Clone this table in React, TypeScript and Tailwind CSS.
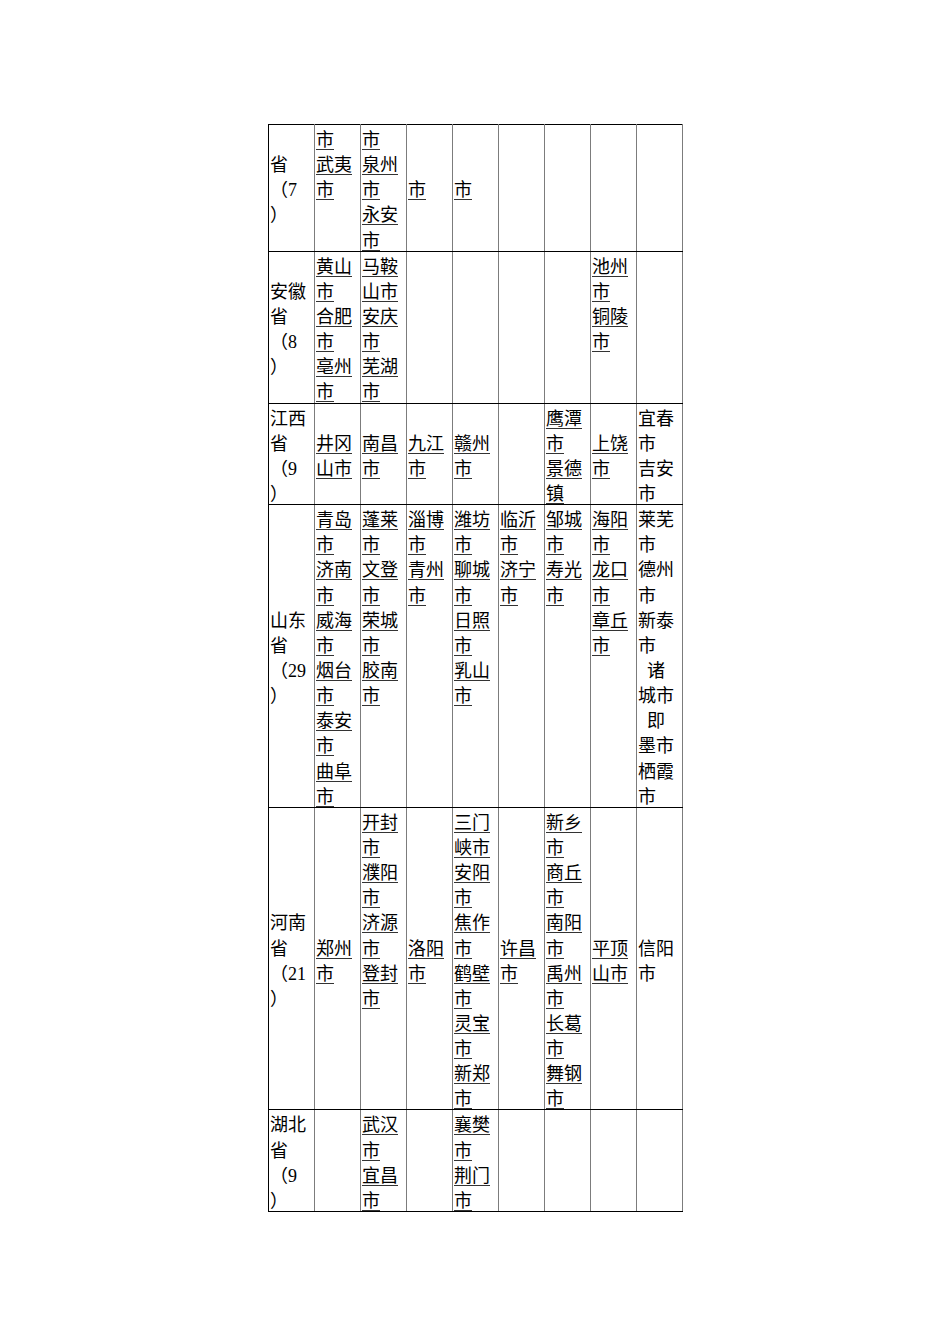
import React from "react";

type Cell = { lines: string[]; link?: boolean };

const L = (lines: string[]): Cell => ({ lines, link: true });
const P = (lines: string[]): Cell => ({ lines, link: false });
const E: Cell = { lines: [] };

const rows: Cell[][] = [
  [
    P(["", "省", "（7", "）"]),
    L(["市", "武夷", "市"]),
    L(["市", "泉州", "市", "永安", "市"]),
    L(["", "", "市"]),
    L(["", "", "市"]),
    E, E, E, E,
  ],
  [
    P(["", "安徽", "省", "（8", "）"]),
    L(["黄山", "市", "合肥", "市", "亳州", "市"]),
    L(["马鞍", "山市", "安庆", "市", "芜湖", "市"]),
    E, E, E, E,
    L(["池州", "市", "铜陵", "市"]),
    E,
  ],
  [
    P(["江西", "省", "（9", "）"]),
    L(["", "井冈", "山市"]),
    L(["", "南昌", "市"]),
    L(["", "九江", "市"]),
    L(["", "赣州", "市"]),
    E,
    L(["鹰潭", "市", "景德", "镇"]),
    L(["", "上饶", "市"]),
    P(["宜春", "市", "吉安", "市"]),
  ],
  [
    P(["", "", "", "", "山东", "省", "（29", "）"]),
    L(["青岛", "市", "济南", "市", "威海", "市", "烟台", "市", "泰安", "市", "曲阜", "市"]),
    L(["蓬莱", "市", "文登", "市", "荣城", "市", "胶南", "市"]),
    L(["淄博", "市", "青州", "市"]),
    L(["潍坊", "市", "聊城", "市", "日照", "市", "乳山", "市"]),
    L(["临沂", "市", "济宁", "市"]),
    L(["邹城", "市", "寿光", "市"]),
    L(["海阳", "市", "龙口", "市", "章丘", "市"]),
    P(["莱芜", "市", "德州", "市", "新泰", "市", "  诸", "城市", "  即", "墨市", "栖霞", "市"]),
  ],
  [
    P(["", "", "", "", "河南", "省", "（21", "）"]),
    L(["", "", "", "", "", "郑州", "市"]),
    L(["开封", "市", "濮阳", "市", "济源", "市", "登封", "市"]),
    L(["", "", "", "", "", "洛阳", "市"]),
    L(["三门", "峡市", "安阳", "市", "焦作", "市", "鹤壁", "市", "灵宝", "市", "新郑", "市"]),
    L(["", "", "", "", "", "许昌", "市"]),
    L(["新乡", "市", "商丘", "市", "南阳", "市", "禹州", "市", "长葛", "市", "舞钢", "市"]),
    L(["", "", "", "", "", "平顶", "山市"]),
    P(["", "", "", "", "", "信阳", "市"]),
  ],
  [
    P(["湖北", "省", "（9", "）"]),
    E,
    L(["武汉", "市", "宜昌", "市"]),
    E,
    L(["襄樊", "市", "荆门", "市"]),
    E, E, E, E,
  ],
];

export default function App() {
  return (
    <div
      className="min-h-[1344px] w-[950px] bg-white pt-[124px] pl-[268px] text-black"
      style={{ fontFamily: '"Liberation Serif", "Noto Sans CJK SC", serif' }}
    >
      <table className="table-fixed border-collapse w-[415px]">
        <colgroup>
          {Array.from({ length: 9 }).map((_, i) => (
            <col key={i} className="w-[46px]" />
          ))}
        </colgroup>
        <tbody>
          {rows.map((row, ri) => (
            <tr key={ri}>
              {row.map((cell, ci) => (
                <td
                  key={ci}
                  className={
                    "align-top p-0 pl-px border-b border-b-black border-r border-r-[#7c7c7c] text-[18px] leading-[25.15px] " +
                    (ci === 0 ? "border-l border-l-black " : "") +
                    (ri === 0 ? "border-t border-t-black " : "")
                  }
                >
                  {cell.lines.map((ln, li) => (
                    <div key={li} className="box-border h-[25.15px] pt-[3px] whitespace-pre overflow-visible">
                      {ln === "" ? null : cell.link ? (
                        <span className="underline decoration-[#333] underline-offset-[3px]">{ln}</span>
                      ) : (
                        <span>{ln}</span>
                      )}
                    </div>
                  ))}
                </td>
              ))}
            </tr>
          ))}
        </tbody>
      </table>
    </div>
  );
}
